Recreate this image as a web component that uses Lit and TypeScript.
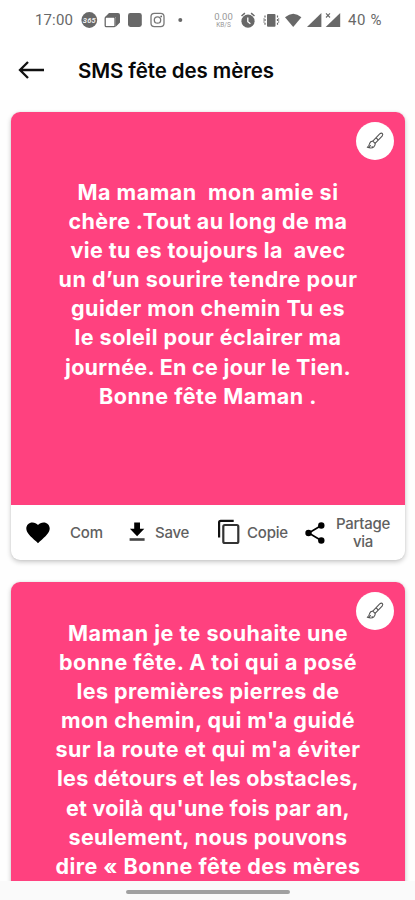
import { LitElement, html, css, nothing } from "lit";
import { customElement, property } from "lit/decorators.js";
import { styleMap } from "lit/directives/style-map.js";

/** Letter spacing that makes a line of text take up a given width. */
function tracking(text: string, font: string, width: number): string {
  const probe = document.createElement("span");
  probe.textContent = text;
  probe.style.font = font;
  probe.style.whiteSpace = "pre";
  document.body.append(probe);
  const natural = probe.getBoundingClientRect().width;
  probe.remove();
  return `${((width - natural) / text.length).toFixed(3)}px`;
}

function fitted(text: string, font: string, width: number, cls = "line") {
  return html`<span class=${cls} style=${styleMap({ letterSpacing: tracking(text, font, width) })}>${text}</span>`;
}

type Line = [string, number];

const FIRST: Line[] = [
  ["Ma maman  mon amie si", 261],
  ["chère .Tout au long de ma", 279],
  ["vie tu es toujours la  avec", 275],
  ["un d’un sourire tendre pour", 299],
  ["guider mon chemin Tu es", 274],
  ["le soleil pour éclairer ma", 267],
  ["journée. En ce jour le Tien.", 286],
  ["Bonne fête Maman .", 218],
];

const SECOND: Line[] = [
  ["Maman je te souhaite une", 280],
  ["bonne fête. A toi qui a posé", 298],
  ["les premières pierres de", 263],
  ["mon chemin, qui m'a guidé", 294],
  ["sur la route et qui m'a éviter", 305],
  ["les détours et les obstacles,", 302],
  ["et voilà qu'une fois par an,", 284],
  ["seulement, nous pouvons", 279],
  ["dire « Bonne fête des mères", 305],
];

@customElement("status-bar")
class StatusBar extends LitElement {
  static styles = css`
    :host { display: block; height: 40px; color: #686868; font-family: Roboto, sans-serif; }
    .bar { display: flex; justify-content: space-between; height: 40px; padding: 0 33px 0 35px; }
    .side { display: flex; align-items: center; }
    .text { font-size: 15px; line-height: 41px; white-space: pre; }
    .rate { display: flex; flex-direction: column; align-items: center; width: 19px; color: #999; margin-right: 7px; }
    .rate b { font-weight: 400; font-size: 9.5px; line-height: 12px; }
    .rate i { font-style: normal; font-size: 6.5px; line-height: 7px; margin-top: -1px; }
    svg { display: block; }
  `;
  render() {
    return html`<div class="bar">
      <div class="side">
        ${fitted("17:00", "15px Roboto", 38, "text")}
        <svg width="114" height="40" viewBox="73 0 114 40" fill="#686868">
          <circle cx="89.3" cy="20" r="7.9" />
          <text x="89.3" y="22.8" font-size="7.5" font-weight="700" font-style="italic" text-anchor="middle" fill="#eee" textLength="13">365</text>
          <path d="M109 13h9a2 2 0 0 1 2 2v7.500l-4.500 4.500V17l-11 .5z" />
          <rect x="105.200" y="17.200" width="9.800" height="9.500" rx="1.200" fill="#fff" stroke="#686868" stroke-width="1.300" />
          <rect x="128" y="13" width="13.800" height="14" rx="2.400" />
          <g fill="none" stroke="#777" stroke-width="1.300">
            <rect x="151" y="13.400" width="13" height="13.200" rx="3.400" />
            <circle cx="157.500" cy="20" r="3.200" />
          </g>
          <circle cx="161.200" cy="16.400" r=".9" />
          <circle cx="180.300" cy="20" r="2" />
        </svg>
      </div>
      <div class="side">
        <div class="rate"><b>0.00</b><i>KB/S</i></div>
        <svg width="108" height="40" viewBox="240 0 108 40" fill="#686868">
          <circle cx="248" cy="21.200" r="6.600" />
          <path d="M241.500 16l3.400-2.800M254.500 16l-3.400-2.800" stroke="#686868" stroke-width="1.500" />
          <path d="M247.800 17.500v4.200l2.600 2" fill="none" stroke="#fff" stroke-width="1.300" />
          <rect x="267" y="14" width="8.500" height="12.800" rx="1" />
          <path d="M265 15.500v10M277.500 15.500v10" stroke="#686868" stroke-width="1.200" stroke-dasharray="2 1.600" />
          <path d="M264 18v5M278.700 18v5" stroke="#999" stroke-width="1" />
          <path d="M285 17.200q8.300-7 16.400 0L293.200 27z" />
          <path d="M307 26.900L321.400 13v13.900z" />
          <path d="M325.700 26.900L340.200 13v13.900z" />
          <path d="M326 13.300l4 4.200m0-4.200l-4 4.200" stroke="#686868" stroke-width="1.100" />
        </svg>
        ${fitted("40 %", "15px Roboto", 34, "text")}
      </div>
    </div>`;
  }
}

@customElement("message-card")
class MessageCard extends LitElement {
  @property({ attribute: false }) lines: Line[] = [];
  @property({ type: Boolean }) actions = false;
  static styles = css`
    :host { display: block; }
    .card { border-radius: 9px; background: #fff; box-shadow: 0 2px 5px rgba(0, 0, 0, 0.22), 0 0 2px rgba(0, 0, 0, 0.08); overflow: hidden; }
    .message {
      position: relative; box-sizing: border-box; height: 393.5px; background: #ff417f; color: #fff;
      display: flex; flex-direction: column; align-items: center;
      font: 700 21.5px/29.2px Inter, sans-serif;
      padding-top: var(--message-top, 66px);
    }
    .line { white-space: pre; height: 29.2px; flex: none; }
    .brush {
      position: absolute; top: 10px; right: 11.5px; width: 38px; height: 38px; border-radius: 50%;
      background: #fff; display: grid; place-items: center;
    }
    svg { display: block; }
    .actions { display: flex; align-items: center; height: 54.5px; color: #606060; font: 500 15px/18px Inter, sans-serif; }
    .action { display: flex; align-items: center; }
    .label { white-space: pre; margin-top: 1px; height: 18px; }
    .stack { display: flex; flex-direction: column; align-items: center; }
    .stack .label { margin-top: 0; }
    .like { width: 116px; padding-left: 15px; box-sizing: border-box; gap: 20px; }
    .save { width: 90px; gap: 8px; }
    .copy { width: 87px; gap: 7px; }
    .share { gap: 10px; padding-top: 1px; }
  `;
  private label(text: string, width: number) {
    return fitted(text, "500 15px Inter", width, "label");
  }
  private renderActions() {
    return html`<div class="actions">
      <div class="action like">
        <svg width="24" height="24" viewBox="0 0 24 24"><path d="M12 23.200l-1.700-1.600C4.200 16 .3 12.600.3 8.400.3 5 3 2.400 6.400 2.400c2.200 0 4.300 1 5.600 2.700 1.300-1.700 3.400-2.700 5.600-2.700 3.400 0 6.100 2.600 6.100 6 0 4.200-3.900 7.600-10 13.200z" /></svg>
        ${this.label("Com", 33)}
      </div>
      <div class="action save">
        <svg width="20" height="24" viewBox="0 0 20 24"><path d="M7.200 2.500h5.800v6.200h4.300L10.100 16.200 2.900 8.700h4.300z" /><rect x="2.600" y="18.200" width="15" height="2.600" fill="#444" /></svg>
        ${this.label("Save", 34)}
      </div>
      <div class="action copy">
        <svg width="23" height="26" viewBox="0 0 23 26" fill="none"><path d="M2.100 18.500V3.500q0-1.600 1.600-1.600h13" stroke="#111" stroke-width="2.200" /><rect x="6.300" y="6" width="15" height="18" rx="1.500" stroke="#333" stroke-width="2.200" /></svg>
        ${this.label("Copie", 41)}
      </div>
      <div class="action share">
        <svg width="22" height="24" viewBox="0 0 22 24"><path d="M17.300 4.500L4.700 12l12.600 7.500" fill="none" stroke="#000" stroke-width="1.700" /><circle cx="17.300" cy="4.500" r="3.200" /><circle cx="4.500" cy="12" r="3.200" /><circle cx="17.300" cy="19.500" r="3.200" /></svg>
        <div class="stack">${this.label("Partage", 54)}${this.label("via", 20)}</div>
      </div>
    </div>`;
  }
  render() {
    return html`<div class="card">
      <div class="message">
        ${this.lines.map(([t, w]) => fitted(t, "700 21.5px Inter", w))}
        <div class="brush">
          <svg width="20" height="20" viewBox="0 0 20 20" fill="none" stroke="#555" stroke-width="1.100" stroke-linejoin="round">
            <path d="M7.800 10.100L14.700 2.900q1.600-1.300 2.600-.4t-.2 2.700L10.100 12.400z" />
            <path d="M11.100 6.900l2.200 2.100M7.800 10.100q-2.600.1-3.200 2.400c-.4 1.900-1 2.900-2.300 3.700 2.300.9 5.200.8 6.600-.4 1.100-.9 1.500-2.100 1.200-3.400M4.300 16.500q.4-1.600 1.500-2.200M6.700 16.300l.8-1.100" />
          </svg>
        </div>
      </div>
      ${this.actions ? this.renderActions() : nothing}
    </div>`;
  }
}

@customElement("app-root")
class AppRoot extends LitElement {
  static styles = css`
    :host { display: block; width: 415px; height: 900px; overflow: hidden; background: #fff; }
    .screen { display: flex; flex-direction: column; height: 900px; }
    .header { display: flex; align-items: center; height: 60px; padding: 0 18px; gap: 33px; color: #080808; font: 600 20.5px/61px Inter, sans-serif; }
    .title { white-space: pre; }
    .feed { flex: 1; min-height: 0; overflow: hidden; padding: 11.5px 10px 0 11px; display: flex; flex-direction: column; gap: 22px; background: #fefefe; }
    message-card { flex: none; }
    .second { --message-top: 37px; }
    .nav { flex: none; height: 19px; display: flex; justify-content: center; align-items: center; background: #fafafa; }
    .handle { width: 164px; height: 4px; border-radius: 2px; background: #a0a0a0; margin-top: 2px; }
  `;
  render() {
    return html`<div class="screen">
      <status-bar></status-bar>
      <div class="header">
        <svg width="27" height="22" viewBox="0 0 27 22" fill="none" stroke="#111" stroke-width="2.300"><path d="M26 11H2M10 3L2 11l8 8" /></svg>
        ${fitted("SMS fête des mères", "600 20.5px Inter", 196, "title")}
      </div>
      <div class="feed">
        <message-card actions .lines=${FIRST}></message-card>
        <message-card class="second" .lines=${SECOND}></message-card>
      </div>
      <div class="nav"><div class="handle"></div></div>
    </div>`;
  }
}
